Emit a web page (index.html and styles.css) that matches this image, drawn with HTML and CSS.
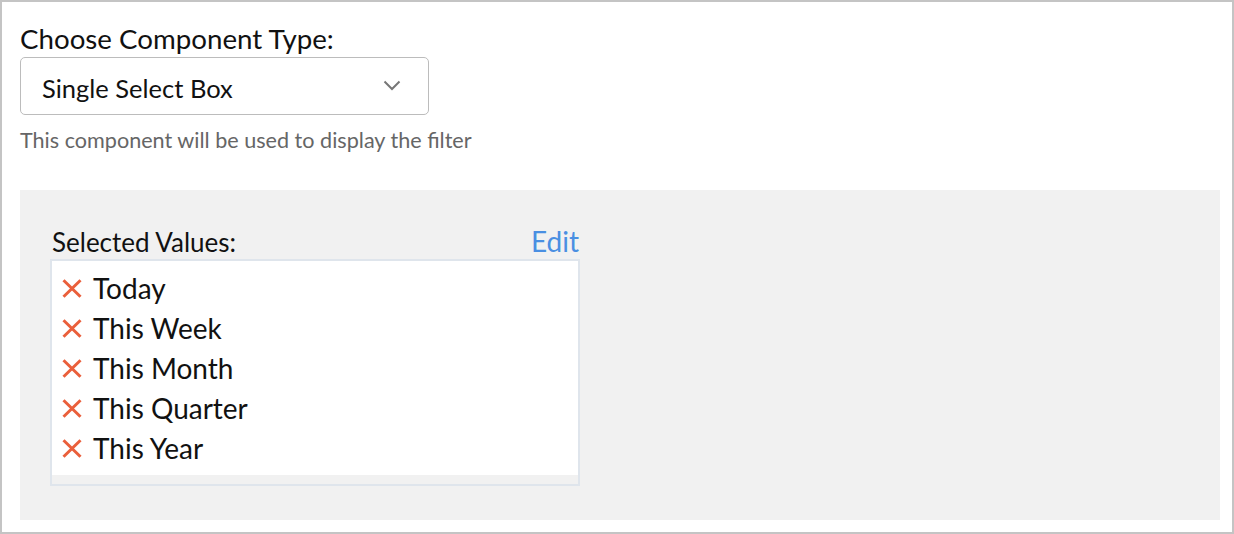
FILE: index.html
```html
<!DOCTYPE html>
<html lang="en">
<head>
    <meta charset="UTF-8">
    <title>Filter Component</title>
    <link rel="stylesheet" href="styles.css">
</head>
<body>
<div class="page">
    <div class="field-label">Choose Component Type:</div>
    <div class="select-box">
        <span class="select-text">Single Select Box</span>
        <svg class="chevron" width="18" height="11" viewBox="0 0 18 11">
            <path d="M1.5 1.5 L9 9 L16.5 1.5" fill="none" stroke="#777" stroke-width="2"/>
        </svg>
    </div>
    <div class="hint">This component will be used to display the filter</div>

    <div class="panel">
        <div class="values">
            <div class="values-head">
                <span class="values-title">Selected Values:</span>
                <a class="edit-link" href="#">Edit</a>
            </div>
            <div class="values-box">
                <ul class="values-list">
                    <li><svg class="remove" width="20" height="19" viewBox="0 0 20 19"><path d="M1.5 1.2 L18.5 17.8 M18.5 1.2 L1.5 17.8" stroke="#ea5f3b" stroke-width="3"/></svg>Today</li>
                    <li><svg class="remove" width="20" height="19" viewBox="0 0 20 19"><path d="M1.5 1.2 L18.5 17.8 M18.5 1.2 L1.5 17.8" stroke="#ea5f3b" stroke-width="3"/></svg>This Week</li>
                    <li><svg class="remove" width="20" height="19" viewBox="0 0 20 19"><path d="M1.5 1.2 L18.5 17.8 M18.5 1.2 L1.5 17.8" stroke="#ea5f3b" stroke-width="3"/></svg>This Month</li>
                    <li><svg class="remove" width="20" height="19" viewBox="0 0 20 19"><path d="M1.5 1.2 L18.5 17.8 M18.5 1.2 L1.5 17.8" stroke="#ea5f3b" stroke-width="3"/></svg>This Quarter</li>
                    <li><svg class="remove" width="20" height="19" viewBox="0 0 20 19"><path d="M1.5 1.2 L18.5 17.8 M18.5 1.2 L1.5 17.8" stroke="#ea5f3b" stroke-width="3"/></svg>This Year</li>
                </ul>
            </div>
        </div>
    </div>
</div>
</body>
</html>
```

FILE: styles.css
```css
* {
    padding: 0;
    margin: 0;
    list-style: none;
    box-sizing: border-box;
}

body {
    font-family: Lato, "Noto Sans", sans-serif;
    color: #111;
    background: #fff;
}

.page {
    width: 1234px;
    height: 534px;
    border: 2px solid #c4c4c4;
    padding: 21px 12px 12px 18px;
}

.field-label {
    font-size: 27.7px;
    line-height: 32px;
}

.select-box {
    width: 409px;
    height: 58px;
    margin-top: 2px;
    border: 1px solid #bcbcbc;
    border-radius: 5px;
    padding: 4px 27px 0 21px;
    display: flex;
    align-items: center;
    justify-content: space-between;
    background: #fff;
}

.select-text {
    font-size: 25.5px;
    line-height: 30px;
}

.chevron {
    margin-top: -6px;
}

.hint {
    margin-top: 13px;
    font-size: 21.6px;
    line-height: 24px;
    color: #666;
}

.panel {
    margin-top: 38px;
    height: 330px;
    background: #f1f1f1;
    padding: 35px 30px 34px 30px;
}

.values {
    width: 530px;
}

.values-head {
    display: flex;
    justify-content: space-between;
    align-items: baseline;
    height: 34px;
    padding: 0 1px 0 2px;
}

.values-title {
    font-size: 26px;
    line-height: 32px;
}

.edit-link {
    font-size: 28px;
    line-height: 32px;
    color: #4a8fe2;
    text-decoration: none;
}

.values-box {
    border: 2px solid #dfe5ec;
    padding-bottom: 9px;
    background: #f1f1f1;
}

.values-list {
    background: #fff;
    padding: 7px 10px;
}

.values-list li {
    display: flex;
    align-items: center;
    height: 40px;
    font-size: 28px;
}

.remove {
    margin-right: 11px;
    flex-shrink: 0;
}
```
